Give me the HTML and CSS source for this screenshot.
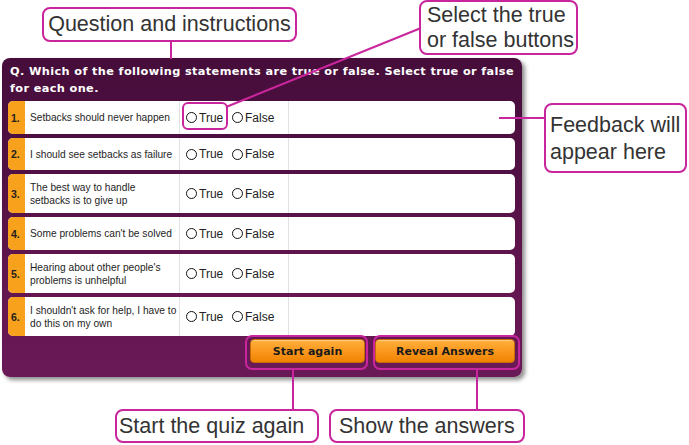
FILE: index.html
```html
<!DOCTYPE html>
<html lang="en">
<head>
<meta charset="utf-8">
<title>True or false quiz</title>
<link rel="stylesheet" href="styles.css">
</head>
<body>
<div class="page">
  <section class="quiz">
    <h1 class="quiz-q">Q. Which of the following statements are true or false. Select true or false<br>for each one.</h1>
    <ol class="rows">
      <li class="row">
        <span class="num">1.</span>
        <span class="stmt">Setbacks should never happen</span>
        <span class="opts"><span class="opt"><i class="radio"></i>True</span><span class="opt"><i class="radio"></i>False</span></span>
        <span class="fb"></span>
      </li>
      <li class="row short">
        <span class="num">2.</span>
        <span class="stmt">I should see setbacks as failure</span>
        <span class="opts"><span class="opt"><i class="radio"></i>True</span><span class="opt"><i class="radio"></i>False</span></span>
        <span class="fb"></span>
      </li>
      <li class="row tall">
        <span class="num">3.</span>
        <span class="stmt">The best way to handle<br>setbacks is to give up</span>
        <span class="opts"><span class="opt"><i class="radio"></i>True</span><span class="opt"><i class="radio"></i>False</span></span>
        <span class="fb"></span>
      </li>
      <li class="row">
        <span class="num">4.</span>
        <span class="stmt">Some problems can't be solved</span>
        <span class="opts"><span class="opt"><i class="radio"></i>True</span><span class="opt"><i class="radio"></i>False</span></span>
        <span class="fb"></span>
      </li>
      <li class="row tall">
        <span class="num">5.</span>
        <span class="stmt">Hearing about other people's<br>problems is unhelpful</span>
        <span class="opts"><span class="opt"><i class="radio"></i>True</span><span class="opt"><i class="radio"></i>False</span></span>
        <span class="fb"></span>
      </li>
      <li class="row tall">
        <span class="num">6.</span>
        <span class="stmt">I shouldn't ask for help, I have to<br>do this on my own</span>
        <span class="opts"><span class="opt"><i class="radio"></i>True</span><span class="opt"><i class="radio"></i>False</span></span>
        <span class="fb"></span>
      </li>
    </ol>
    <div class="actions">
      <button class="btn btn-start">Start again</button>
      <button class="btn btn-reveal">Reveal Answers</button>
    </div>
  </section>

  <svg class="connectors" width="689" height="445" viewBox="0 0 689 445" aria-hidden="true">
    <line x1="171" y1="41" x2="171" y2="59"/>
    <line x1="226" y1="107" x2="421" y2="28"/>
    <line x1="499" y1="118" x2="545" y2="118"/>
    <line x1="293" y1="369" x2="293" y2="410"/>
    <line x1="477" y1="369" x2="477" y2="410"/>
  </svg>

  <div class="hl hl-true"></div>
  <div class="hl hl-start"></div>
  <div class="hl hl-reveal"></div>

  <div class="callout c-question">Question and instructions</div>
  <div class="callout c-select">Select the true<br>or false buttons</div>
  <div class="callout c-feedback">Feedback will<br>appear here</div>
  <div class="callout c-start">Start the quiz again</div>
  <div class="callout c-show">Show the answers</div>
</div>
</body>
</html>
```

FILE: styles.css
```css
* { box-sizing: border-box; }
html, body { margin: 0; padding: 0; background: #ffffff; }
body { font-family: "Liberation Sans", Arial, sans-serif; }

.page {
  position: relative;
  width: 689px;
  height: 445px;
  overflow: hidden;
  padding-top: 58px;
  padding-left: 2px;
}

.quiz {
  width: 520px;
  height: 319px;
  padding: 5px 7px 0 6px;
  border-radius: 8px;
  background: linear-gradient(to bottom, #460d3a 0%, #4f1042 30%, #62164f 70%, #6a1957 100%);
  box-shadow: 3px 3px 4px rgba(0, 0, 0, 0.45);
}

.quiz-q {
  margin: 0 0 4px 0;
  padding-left: 2px;
  height: 34px;
  font-family: "DejaVu Sans", Verdana, sans-serif;
  font-weight: bold;
  font-size: 11.3px;
  line-height: 17px;
  color: #ffffff;
  letter-spacing: 0.38px;
  white-space: nowrap;
}

.rows {
  list-style: none;
  margin: 0;
  padding: 0;
  display: flex;
  flex-direction: column;
  gap: 4px;
}

.row {
  display: flex;
  height: 33px;
  background: #ffffff;
  border-radius: 5px;
  overflow: hidden;
  color: #1e1e1e;
  font-size: 10.2px;
}
.row.short { height: 32px; }
.row.tall { height: 39px; }

.num {
  flex: 0 0 17px;
  background: #f7a11c;
  font-weight: bold;
  padding-left: 3px;
  display: flex;
  align-items: center;
  font-size: 10.5px;
}

.stmt {
  flex: 0 0 155px;
  padding: 0 0 0 5px;
  border-right: 1px solid #e2e2e2;
  display: flex;
  align-items: center;
  line-height: 13px;
  white-space: nowrap;
}

.opts {
  flex: 0 0 109px;
  border-right: 1px solid #e2e2e2;
  display: flex;
  align-items: center;
  padding-left: 6px;
  font-size: 12px;
  color: #222;
}

.opt {
  display: inline-flex;
  align-items: center;
  gap: 2px;
}
.opt:first-child { width: 46px; }

.radio {
  display: inline-block;
  width: 11px;
  height: 11px;
  border: 1.3px solid #111;
  border-radius: 50%;
}

.fb { flex: 1; }

.actions {
  margin-top: 3px;
  display: flex;
  justify-content: flex-end;
  gap: 10px;
}

.btn {
  height: 24px;
  border: 1px solid #c86a08;
  border-radius: 4px;
  background: linear-gradient(to bottom, #ffb13c 0%, #fb9a22 45%, #f08300 100%);
  font-family: "DejaVu Sans", Verdana, sans-serif;
  font-weight: bold;
  font-size: 11px;
  color: #1a1a1a;
  padding: 0;
  box-shadow: inset 0 1px 0 rgba(255, 255, 255, 0.35);
}
.btn-start { width: 115px; }
.btn-reveal { width: 140px; }

.connectors {
  position: absolute;
  left: 0;
  top: 0;
  pointer-events: none;
}
.connectors line {
  stroke: #c9259c;
  stroke-width: 2;
}

.hl {
  position: absolute;
  border: 2px solid #c9259c;
  border-radius: 7px;
  pointer-events: none;
}
.hl-true { left: 182px; top: 102px; width: 46px; height: 28px; border-radius: 6px; }
.hl-start { left: 245px; top: 335px; width: 123px; height: 35px; }
.hl-reveal { left: 373px; top: 335px; width: 147px; height: 35px; }

.callout {
  position: absolute;
  background: #ffffff;
  border: 2px solid #c9259c;
  border-radius: 8px;
  color: #333333;
  font-family: "Liberation Sans", Arial, sans-serif;
  font-size: 21.5px;
  line-height: 25px;
  white-space: nowrap;
}
.c-question { left: 42px; top: 7px; width: 255px; height: 35px; padding-top: 3px; text-align: center; }
.c-select { left: 419px; top: 0; width: 159px; height: 55px; padding: 1px 0 0 6px; line-height: 25px; }
.c-feedback { left: 544px; top: 103px; width: 143px; height: 70px; padding: 7px 0 0 4px; line-height: 27px; }
.c-start { left: 115px; top: 409px; width: 204px; height: 34px; padding: 3px 0 0 2px; }
.c-show { left: 329px; top: 409px; width: 196px; height: 34px; padding: 3px 0 0 8px; }
```
